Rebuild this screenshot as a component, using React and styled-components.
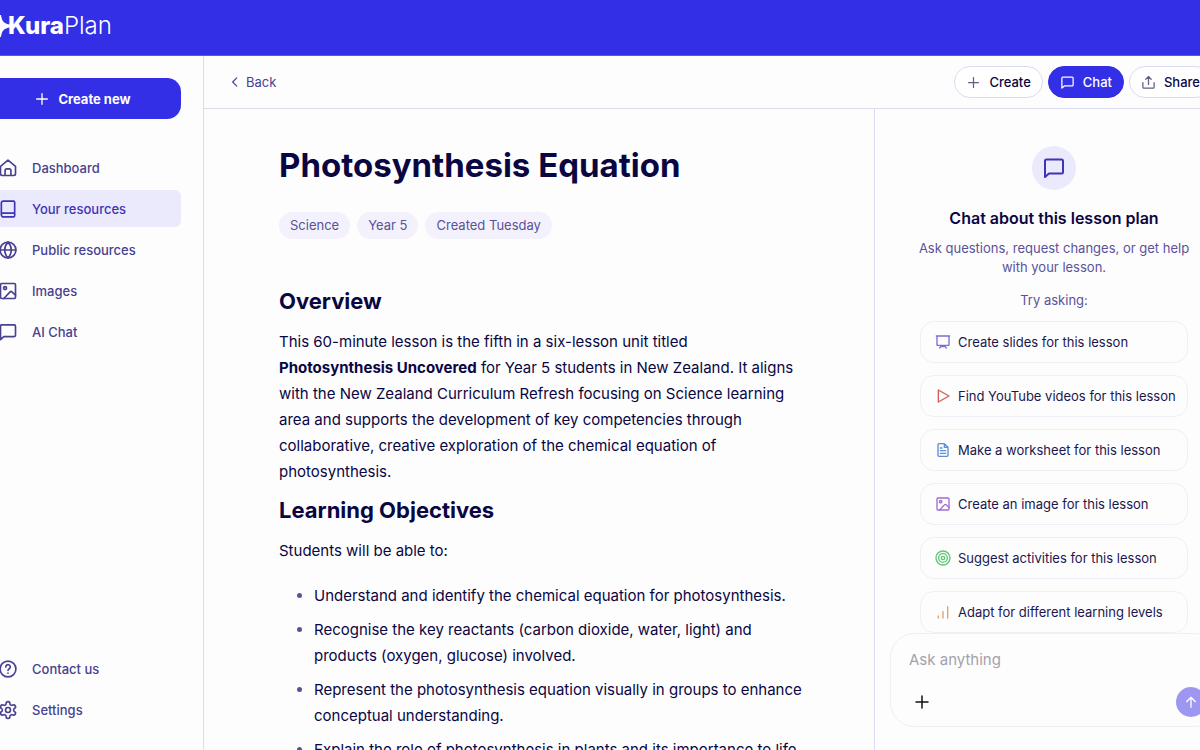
import React from 'react'
import styled, { createGlobalStyle } from 'styled-components'

const color = {
  brand: '#322fe6',
  brandSoft: '#ebe9fc',
  tag: '#f2f1fc',
  main: '#0a0642',
  nav: '#48418f',
  muted: '#5a5299',
  border: '#dcdcf0',
  faint: '#efeff7',
  page: '#fdfdfe',
}

const font = "Inter, 'Liberation Sans', sans-serif"

const GlobalStyle = createGlobalStyle`
  * {
    box-sizing: border-box;
  }

  body {
    margin: 0;
    overflow: hidden;
    background: ${color.page};
    color: ${color.main};
    font-family: ${font};
  }

  button,
  textarea {
    font-family: inherit;
  }
`

/* the shell bleeds past both sides of the window */
const Page = styled.div`
  height: 100vh;
  margin: 0 -33px 0 -16px;
  display: flex;
  flex-direction: column;
`

const Header = styled.header`
  height: 56px;
  flex: none;
  display: flex;
  align-items: center;
  padding: 0 8px 4px;
  background: ${color.brand};
  border-bottom: 1px solid #5a57ea;
`

const Logo = styled.a`
  display: flex;
  align-items: center;
  color: #fff;
  text-decoration: none;
  font-size: 24px;
  line-height: 32px;
  font-weight: 300;

  svg {
    overflow: visible;
  }

  strong {
    font-weight: 800;
  }
`

const Body = styled.div`
  flex: 1;
  min-height: 0;
  display: flex;
`

const Sidebar = styled.aside`
  width: 220px;
  flex: none;
  display: flex;
  flex-direction: column;
  padding: 22px 22px 22px 0;
  border-right: 1px solid ${color.border};
`

const CreateButton = styled.button`
  height: 41px;
  flex: none;
  display: flex;
  align-items: center;
  justify-content: center;
  gap: 8px;
  margin-bottom: 30px;
  padding: 0;
  border: 0;
  border-radius: 14px;
  background: ${color.brand};
  color: #fff;
  font-size: 13px;
  font-weight: 700;
`

const Nav = styled.nav`
  display: flex;
  flex-direction: column;
  gap: 4px;
  margin-top: ${(props) => (props.$bottom ? 'auto' : '0')};
`

const NavLink = styled.a`
  height: 37px;
  display: flex;
  align-items: center;
  gap: 14px;
  padding: 0 14px;
  border-radius: 6px;
  background: ${(props) => (props.$active ? color.brandSoft : 'transparent')};
  color: ${(props) => (props.$active ? '#3d35b5' : color.nav)};
  font-size: 13px;
  font-weight: 500;
  text-decoration: none;
`

const Content = styled.div`
  flex: 1;
  min-width: 0;
  display: flex;
  flex-direction: column;
`

const Toolbar = styled.div`
  height: 53px;
  flex: none;
  display: flex;
  align-items: center;
  justify-content: space-between;
  padding: 0 21px 0 24px;
  border-bottom: 1px solid ${color.border};
`

const BackLink = styled.a`
  display: flex;
  align-items: center;
  gap: 4px;
  color: ${color.nav};
  font-size: 13px;
  text-decoration: none;
`

const Actions = styled.div`
  display: flex;
  gap: 5px;
`

const PillButton = styled.button`
  height: 32px;
  display: flex;
  align-items: center;
  gap: 8px;
  padding: 0 11px;
  border: 1px solid ${(props) => (props.$primary ? color.brand : color.border)};
  border-radius: 16px;
  background: ${(props) => (props.$primary ? color.brand : '#fff')};
  color: ${(props) => (props.$primary ? '#fff' : color.main)};
  font-size: 13px;
  font-weight: 500;

  svg {
    color: ${(props) => (props.$primary ? '#fff' : '#625f80')};
  }
`

const Split = styled.div`
  flex: 1;
  min-height: 0;
  display: flex;
`

const Document = styled.main`
  flex: 1;
  min-width: 0;
  overflow: hidden;
  padding: 34px 21px 0 26px;
`

const Article = styled.article`
  max-width: 525px;
  margin: 0 auto;
  font-size: 15px;
  line-height: 26px;
`

const Title = styled.h1`
  margin: 0 0 25px;
  font-size: 33px;
  line-height: 44px;
  font-weight: 700;
`

const Tags = styled.div`
  display: flex;
  gap: 7px;
  margin-bottom: 46px;
`

const Tag = styled.span`
  padding: 0 11px;
  border-radius: 14px;
  background: ${color.tag};
  color: ${color.muted};
  font-size: 13px;
  line-height: 27px;
`

const Subtitle = styled.h2`
  margin: 0 0 12px;
  font-size: 22px;
  line-height: 32px;
  font-weight: 700;
`

const Paragraph = styled.p`
  margin: 0 0 9px;
`

const ObjectiveList = styled.ul`
  display: grid;
  gap: 8px;
  margin: 19px 0 0;
  padding-left: 35px;

  li::marker {
    color: ${color.muted};
  }
`

const ChatPanel = styled.section`
  width: 359px;
  flex: none;
  display: flex;
  flex-direction: column;
  padding: 0 15px 23px;
  border-left: 1px solid ${color.border};
`

const ChatIntro = styled.div`
  flex: 1;
  min-height: 0;
  overflow: hidden;
  display: flex;
  flex-direction: column;
  align-items: center;
  padding: 37px 26px 0;
  color: ${color.muted};
  font-size: 13px;
  line-height: 19px;
  text-align: center;
`

const Bubble = styled.div`
  width: 44px;
  height: 44px;
  flex: none;
  display: grid;
  place-items: center;
  border-radius: 50%;
  background: ${color.brandSoft};
  color: #3f34b8;
`

const ChatTitle = styled.h3`
  margin: 16px 0 9px;
  color: ${color.main};
  font-size: 16px;
  line-height: 24px;
  font-weight: 600;
`

const ChatText = styled.p`
  margin: 0;
`

const ChatHint = styled(ChatText)`
  margin-top: 14px;
`

const Suggestions = styled.div`
  width: 100%;
  max-width: 268px;
  display: flex;
  flex-direction: column;
  gap: 12px;
  margin-top: 11px;
`

const Suggestion = styled.button`
  height: 42px;
  flex: none;
  display: flex;
  align-items: center;
  gap: 7px;
  padding: 0 14px;
  border: 1px solid ${color.faint};
  border-radius: 14px;
  background: transparent;
  color: #1b174d;
  font-size: 13px;
  white-space: nowrap;

  svg {
    flex: none;
    color: ${(props) => props.$tint};
  }
`

const Composer = styled.form`
  height: 94px;
  flex: none;
  display: flex;
  flex-direction: column;
  justify-content: space-between;
  padding: 16px 11px 9px 16px;
  border: 1px solid ${color.faint};
  border-radius: 24px;
`

const Prompt = styled.textarea`
  height: 20px;
  padding: 0 2px;
  border: 0;
  outline: 0;
  resize: none;
  background: transparent;
  color: ${color.main};
  font-size: 15px;
  line-height: 20px;

  &::placeholder {
    color: #a3a2aa;
  }
`

const ComposerActions = styled.div`
  display: flex;
  justify-content: space-between;
`

const RoundButton = styled.button`
  width: 30px;
  height: 30px;
  display: grid;
  place-items: center;
  padding: 0;
  border: 0;
  border-radius: 50%;
  background: ${(props) => (props.$send ? '#9d97f1' : 'transparent')};
  color: ${(props) => (props.$send ? '#fff' : '#111')};
`

const shapes = {
  home: <path d="M3 10 12 2.5 21 10v9a2 2 0 0 1-2 2H5a2 2 0 0 1-2-2zM8.5 21v-6a2 2 0 0 1 2-2h3a2 2 0 0 1 2 2v6" />,
  book: <path d="M4 19V5a2.5 2.5 0 0 1 2.5-2.5h12A1.5 1.5 0 0 1 20 4v16a1.5 1.5 0 0 1-1.5 1.5h-12A2.5 2.5 0 0 1 4 19zM4 17h16" />,
  globe: (
    <>
      <circle cx="12" cy="12" r="9.5" />
      <path d="M2.5 12h19M12 2.5c5.3 5.4 5.3 13.6 0 19M12 2.5c-5.3 5.4-5.3 13.6 0 19" />
    </>
  ),
  image: (
    <>
      <rect x="3" y="3" width="18" height="18" rx="1.5" />
      <circle cx="8.5" cy="8.5" r="1.8" />
      <path d="m7 21 7.5-8a1.5 1.5 0 0 1 2.2 0L21 17" />
    </>
  ),
  chat: <path d="M3 21V5a1.5 1.5 0 0 1 1.5-1.5h15A1.5 1.5 0 0 1 21 5v11a1.5 1.5 0 0 1-1.5 1.5H7z" />,
  help: (
    <>
      <circle cx="12" cy="12" r="9.5" />
      <path d="M9.3 9.5a2.7 2.7 0 1 1 4.2 2.2c-.9.6-1.5 1-1.5 2.1M12 17v.1" />
    </>
  ),
  settings: (
    <>
      <path d="M12.22 2h-.44a2 2 0 0 0-2 2v.18a2 2 0 0 1-1 1.73l-.43.25a2 2 0 0 1-2 0l-.15-.08a2 2 0 0 0-2.73.73l-.22.38a2 2 0 0 0 .73 2.73l.15.1a2 2 0 0 1 1 1.72v.51a2 2 0 0 1-1 1.74l-.15.09a2 2 0 0 0-.73 2.73l.22.38a2 2 0 0 0 2.73.73l.15-.08a2 2 0 0 1 2 0l.43.25a2 2 0 0 1 1 1.73V20a2 2 0 0 0 2 2h.44a2 2 0 0 0 2-2v-.18a2 2 0 0 1 1-1.73l.43-.25a2 2 0 0 1 2 0l.15.08a2 2 0 0 0 2.73-.73l.22-.39a2 2 0 0 0-.73-2.73l-.15-.08a2 2 0 0 1-1-1.74v-.5a2 2 0 0 1 1-1.74l.15-.09a2 2 0 0 0 .73-2.73l-.22-.38a2 2 0 0 0-2.73-.73l-.15.08a2 2 0 0 1-2 0l-.43-.25a2 2 0 0 1-1-1.73V4a2 2 0 0 0-2-2z" />
      <circle cx="12" cy="12" r="3" />
    </>
  ),
  plus: <path d="M12 4v16M4 12h16" />,
  back: <path d="m15 5-7 7 7 7" />,
  share: <path d="M12 15V2.5M7.5 7 12 2.500 16.5 7M3 12v7.5A1.5 1.5 0 0 0 4.5 21h15a1.5 1.5 0 0 0 1.5-1.5V12" />,
  slides: <path d="M2 3h20M3 3v14h18V3M10 17l-3 4M14 17l3 4M9 19h6" />,
  play: <path d="M5 3v18l16-9z" />,
  worksheet: <path d="M14 2.5H6A1.5 1.5 0 0 0 4.5 4v16A1.5 1.5 0 0 0 6 21.5h12a1.5 1.5 0 0 0 1.5-1.5V8zM14 2.5V8h5.5M8 9h2.5M8 13h8M8 17h8" />,
  target: (
    <>
      <circle cx="12" cy="12" r="10.5" />
      <circle cx="12" cy="12" r="6.5" />
      <circle cx="12" cy="12" r="2.5" />
    </>
  ),
  bars: <path d="M5 21v-3M12 21V11M19 21V4" />,
  up: <path d="M12 20V5M5.5 11.5 12 5l6.5 6.5" />,
}

function Icon({ name, size = 20, stroke = 2 }) {
  return (
    <svg
      width={size}
      height={size}
      viewBox="0 0 24 24"
      fill="none"
      stroke="currentColor"
      strokeWidth={stroke}
      strokeLinecap="round"
      strokeLinejoin="round"
      aria-hidden="true"
    >
      {shapes[name]}
    </svg>
  )
}

const mainLinks = [
  { icon: 'home', text: 'Dashboard' },
  { icon: 'book', text: 'Your resources', active: true },
  { icon: 'globe', text: 'Public resources' },
  { icon: 'image', text: 'Images' },
  { icon: 'chat', text: 'AI Chat' },
]

const bottomLinks = [
  { icon: 'help', text: 'Contact us' },
  { icon: 'settings', text: 'Settings' },
]

const tagList = ['Science', 'Year 5', 'Created Tuesday']

const objectives = [
  'Understand and identify the chemical equation for photosynthesis.',
  'Recognise the key reactants (carbon dioxide, water, light) and products (oxygen, glucose) involved.',
  'Represent the photosynthesis equation visually in groups to enhance conceptual understanding.',
  'Explain the role of photosynthesis in plants and its importance to life',
]

const suggestionList = [
  { icon: 'slides', tint: '#7b6fd0', text: 'Create slides for this lesson' },
  { icon: 'play', tint: '#cf5f5f', text: 'Find YouTube videos for this lesson' },
  { icon: 'worksheet', tint: '#5b8fd6', text: 'Make a worksheet for this lesson' },
  { icon: 'image', tint: '#a36bd0', text: 'Create an image for this lesson' },
  { icon: 'target', tint: '#5fc673', text: 'Suggest activities for this lesson' },
  { icon: 'bars', tint: '#e0a068', text: 'Adapt for different learning levels' },
]

function App() {
  return (
    <React.Fragment>
      <GlobalStyle />
      <Page>
        <Header>
          <Logo href="#">
            <svg width="16" height="24" viewBox="0 0 16 24" fill="#fff" aria-hidden="true">
              <path d="M7 1h2c.8 6 2.8 8.8 9 9.5v3c-6.2.7-8.2 3.5-9 9.5H7c-.8-6-2.8-8.8-9-9.5v-3c6.2-.7 8.2-3.5 9-9.5z" />
            </svg>
            <span>
              <strong>Kura</strong>Plan
            </span>
          </Logo>
        </Header>

        <Body>
          <Sidebar>
            <CreateButton type="button">
              <Icon name="plus" size={16} />
              Create new
            </CreateButton>

            <Nav>
              {mainLinks.map(({ icon, text, active }) => (
                <NavLink key={text} href="#" $active={active}>
                  <Icon name={icon} />
                  {text}
                </NavLink>
              ))}
            </Nav>

            <Nav $bottom>
              {bottomLinks.map(({ icon, text }) => (
                <NavLink key={text} href="#">
                  <Icon name={icon} />
                  {text}
                </NavLink>
              ))}
            </Nav>
          </Sidebar>

          <Content>
            <Toolbar>
              <BackLink href="#">
                <Icon name="back" size={14} />
                Back
              </BackLink>
              <Actions>
                <PillButton type="button">
                  <Icon name="plus" size={15} />
                  Create
                </PillButton>
                <PillButton type="button" $primary>
                  <Icon name="chat" size={15} />
                  Chat
                </PillButton>
                <PillButton type="button">
                  <Icon name="share" size={15} />
                  Share
                </PillButton>
              </Actions>
            </Toolbar>

            <Split>
              <Document>
                <Article>
                  <Title>Photosynthesis Equation</Title>
                  <Tags>
                    {tagList.map((tag) => (
                      <Tag key={tag}>{tag}</Tag>
                    ))}
                  </Tags>

                  <Subtitle>Overview</Subtitle>
                  <Paragraph>
                    This 60-minute lesson is the fifth in a six-lesson unit titled{' '}
                    <strong>Photosynthesis Uncovered</strong> for Year 5 students in
                    New Zealand. It aligns with the New Zealand Curriculum Refresh
                    focusing on Science learning area and supports the development of
                    key competencies through collaborative, creative exploration of
                    the chemical equation of photosynthesis.
                  </Paragraph>

                  <Subtitle>Learning Objectives</Subtitle>
                  <Paragraph>Students will be able to:</Paragraph>
                  <ObjectiveList>
                    {objectives.map((text) => (
                      <li key={text}>{text}</li>
                    ))}
                  </ObjectiveList>
                </Article>
              </Document>

              <ChatPanel>
                <ChatIntro>
                  <Bubble>
                    <Icon name="chat" size={24} />
                  </Bubble>
                  <ChatTitle>Chat about this lesson plan</ChatTitle>
                  <ChatText>
                    Ask questions, request changes, or get help with your lesson.
                  </ChatText>
                  <ChatHint>Try asking:</ChatHint>
                  <Suggestions>
                    {suggestionList.map(({ icon, tint, text }) => (
                      <Suggestion key={text} type="button" $tint={tint}>
                        <Icon name={icon} size={16} />
                        {text}
                      </Suggestion>
                    ))}
                  </Suggestions>
                </ChatIntro>

                <Composer>
                  <Prompt placeholder="Ask anything" aria-label="Ask anything" />
                  <ComposerActions>
                    <RoundButton type="button" aria-label="Add">
                      <Icon name="plus" size={18} />
                    </RoundButton>
                    <RoundButton type="submit" aria-label="Send" $send>
                      <Icon name="up" size={16} />
                    </RoundButton>
                  </ComposerActions>
                </Composer>
              </ChatPanel>
            </Split>
          </Content>
        </Body>
      </Page>
    </React.Fragment>
  )
}

export default App
